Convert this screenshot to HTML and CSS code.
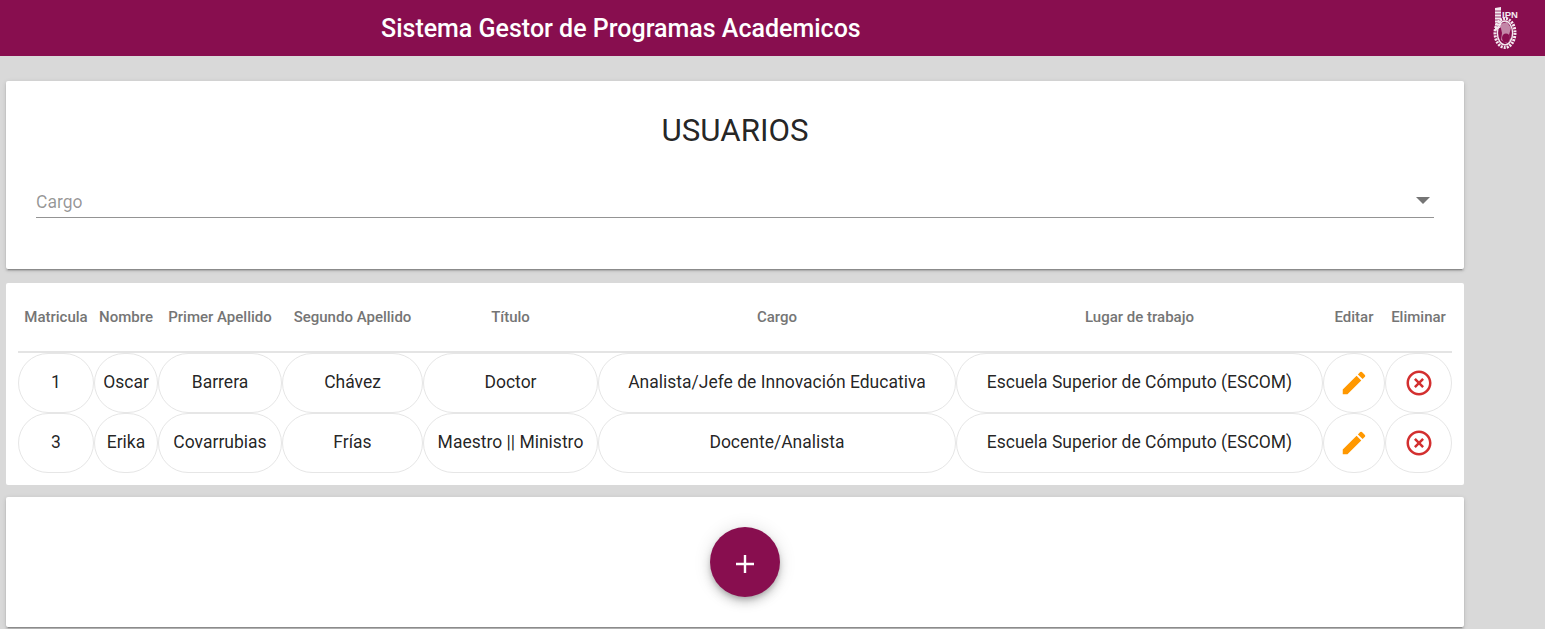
FILE: index.html
```html
<!DOCTYPE html>
<html lang="es">
<head>
<meta charset="utf-8">
<title>Sistema Gestor de Programas Academicos</title>
<link rel="stylesheet" href="styles.css">
</head>
<body>
<header class="topbar">
  <h1 class="topbar-title">Sistema Gestor de Programas Academicos</h1>
  <svg class="logo" viewBox="0 0 26 46" width="26" height="46" aria-label="IPN">
    <path d="M2 3l6-1v20l-6 4z" fill="#f4eaf0"/>
    <path d="M2 6h6M2 9h6M2 12h6M2 15h6M2 18h6M2 21h6" stroke="#880e4f" stroke-width=".8"/>
    <text x="9" y="13" class="logo-text">IPN</text>
    <ellipse cx="12" cy="28" rx="10" ry="14.5" fill="none" stroke="#f4eaf0" stroke-width="3" stroke-dasharray="2 1.1"/>
    <ellipse cx="12" cy="28" rx="7.6" ry="12" fill="none" stroke="#f4eaf0" stroke-width="1.4"/>
    <path d="M7 19l7-2 4 6-2 7 2 5-5 3-5-3 1-7z" fill="#f4eaf0" opacity=".55"/>
    <ellipse cx="13" cy="33" rx="4" ry="4.5" fill="#880e4f"/>
  </svg>
</header>

<main class="content">
  <section class="card filter-card">
    <h2 class="page-title">USUARIOS</h2>
    <div class="select">
      <span class="select-label">Cargo</span>
      <span class="select-arrow"></span>
    </div>
  </section>

  <section class="card table-card">
    <table class="users">
      <colgroup>
        <col class="c1"><col class="c2"><col class="c3"><col class="c4"><col class="c5"><col class="c6"><col class="c7"><col class="c8"><col class="c9">
      </colgroup>
      <thead>
        <tr>
          <th>Matricula</th><th>Nombre</th><th>Primer Apellido</th><th>Segundo Apellido</th><th>Título</th><th>Cargo</th><th>Lugar de trabajo</th><th>Editar</th><th>Eliminar</th>
        </tr>
      </thead>
      <tbody>
        <tr>
          <td>1</td><td>Oscar</td><td>Barrera</td><td>Chávez</td><td>Doctor</td><td>Analista/Jefe de Innovación Educativa</td><td>Escuela Superior de Cómputo (ESCOM)</td>
          <td class="icon-cell"><svg class="icon" viewBox="0 0 24 24" width="30" height="30"><path fill="#ff9800" d="M3 17.25V21h3.75L17.81 9.94l-3.75-3.75L3 17.25zM20.71 7.04a1 1 0 0 0 0-1.41l-2.34-2.34a1 1 0 0 0-1.41 0l-1.83 1.83 3.75 3.75 1.83-1.83z"/></svg></td>
          <td class="icon-cell"><svg class="icon" viewBox="0 0 24 24" width="30" height="30"><path fill="#d32f2f" d="M14.59 8L12 10.59 9.41 8 8 9.41 10.59 12 8 14.59 9.41 16 12 13.41 14.59 16 16 14.59 13.41 12 16 9.41 14.59 8zM12 2C6.47 2 2 6.47 2 12s4.47 10 10 10 10-4.47 10-10S17.53 2 12 2zm0 18c-4.41 0-8-3.59-8-8s3.59-8 8-8 8 3.59 8 8-3.59 8-8 8z"/></svg></td>
        </tr>
        <tr>
          <td>3</td><td>Erika</td><td>Covarrubias</td><td>Frías</td><td>Maestro || Ministro</td><td>Docente/Analista</td><td>Escuela Superior de Cómputo (ESCOM)</td>
          <td class="icon-cell"><svg class="icon" viewBox="0 0 24 24" width="30" height="30"><path fill="#ff9800" d="M3 17.25V21h3.75L17.81 9.94l-3.75-3.75L3 17.25zM20.71 7.04a1 1 0 0 0 0-1.41l-2.34-2.34a1 1 0 0 0-1.41 0l-1.83 1.83 3.75 3.75 1.83-1.83z"/></svg></td>
          <td class="icon-cell"><svg class="icon" viewBox="0 0 24 24" width="30" height="30"><path fill="#d32f2f" d="M14.59 8L12 10.59 9.41 8 8 9.41 10.59 12 8 14.59 9.41 16 12 13.41 14.59 16 16 14.59 13.41 12 16 9.41 14.59 8zM12 2C6.47 2 2 6.47 2 12s4.47 10 10 10 10-4.47 10-10S17.53 2 12 2zm0 18c-4.41 0-8-3.59-8-8s3.59-8 8-8 8 3.59 8 8-3.59 8-8 8z"/></svg></td>
        </tr>
      </tbody>
    </table>
  </section>

  <section class="card action-card">
    <button class="fab" type="button" aria-label="Agregar">
      <svg class="fab-plus" viewBox="0 0 18 18" width="18" height="18"><path d="M7.8 0h2.4v7.8H18v2.4h-7.8V18H7.8v-7.8H0V7.8h7.8z" fill="#fff"/></svg>
    </button>
  </section>
</main>
</body>
</html>
```

FILE: styles.css
```css
* { box-sizing: border-box; }

html, body { height: 100%; }

body {
  margin: 0;
  background: #d9d9d9;
  font-family: Roboto, "Noto Sans", sans-serif;
  color: rgba(0, 0, 0, 0.87);
  overflow: hidden;
}

.topbar {
  height: 56px;
  background: #880e4f;
  display: flex;
  align-items: center;
  justify-content: space-between;
  padding: 0 26px 0 381px;
}

.topbar-title {
  margin: 2px 0 0;
  color: #fff;
  font-size: 25px;
  font-weight: 500;
  line-height: 54px;
}

.logo { flex: none; margin-top: -1px; }

.logo-text {
  fill: #f4eaf0;
  font-family: "Liberation Sans", sans-serif;
  font-size: 9.5px;
  font-weight: 700;
}

.content {
  width: 1458px;
  margin-left: 6px;
  padding-top: 25px;
  display: flex;
  flex-direction: column;
}

.card {
  background: #fff;
  border-radius: 2px;
  box-shadow: 0 2px 2px 0 rgba(0,0,0,.14), 0 3px 1px -2px rgba(0,0,0,.2), 0 1px 5px 0 rgba(0,0,0,.12);
}

.filter-card {
  height: 188px;
  padding: 30px 30px 0;
  margin-bottom: 14px;
}

.page-title {
  margin: 0 0 30px;
  font-size: 31.25px;
  font-weight: 400;
  line-height: 40px;
  text-align: center;
}

.select {
  height: 37px;
  padding-top: 5px;
  display: flex;
  align-items: center;
  justify-content: space-between;
  border-bottom: 1px solid #949494;
}

.select-label {
  color: rgba(0, 0, 0, 0.42);
  font-size: 17.5px;
}

.select-arrow {
  width: 0;
  height: 0;
  margin: 0 4px 3px 0;
  border-left: 7px solid transparent;
  border-right: 7px solid transparent;
  border-top: 7px solid #757575;
}

.table-card {
  height: 202px;
  padding-left: 12px;
  margin-bottom: 12px;
  box-shadow: none;
}

.users {
  width: 1434px;
  table-layout: fixed;
  border-collapse: separate;
  border-spacing: 0;
}

.c1 { width: 76px; }
.c2 { width: 64px; }
.c3 { width: 124px; }
.c4 { width: 141px; }
.c5 { width: 175px; }
.c6 { width: 358px; }
.c7 { width: 367px; }
.c8 { width: 62px; }
.c9 { width: 67px; }

.users th {
  height: 70px;
  padding: 0 0 1px;
  border-bottom: 2px solid #e4e4e4;
  color: #757575;
  font-size: 15px;
  font-weight: 500;
  text-align: center;
  white-space: nowrap;
}

.users td {
  height: 60px;
  padding: 0 0 2px;
  border: 1px solid #e6e6e6;
  border-radius: 30px;
  font-size: 17.5px;
  text-align: center;
  white-space: nowrap;
}

.users .icon-cell { padding: 0; }

.icon { display: block; margin: 0 auto; }

.action-card {
  height: 130px;
  display: flex;
  align-items: flex-start;
  justify-content: center;
  padding: 30px 0 0 20px;
}

.fab {
  width: 70px;
  height: 70px;
  padding: 4px 0 0;
  border: 0;
  border-radius: 50%;
  background: #880e4f;
  display: flex;
  align-items: center;
  justify-content: center;
  box-shadow: 0 3px 5px -1px rgba(0,0,0,.2), 0 6px 10px 0 rgba(0,0,0,.14), 0 1px 18px 0 rgba(0,0,0,.12);
}
```
